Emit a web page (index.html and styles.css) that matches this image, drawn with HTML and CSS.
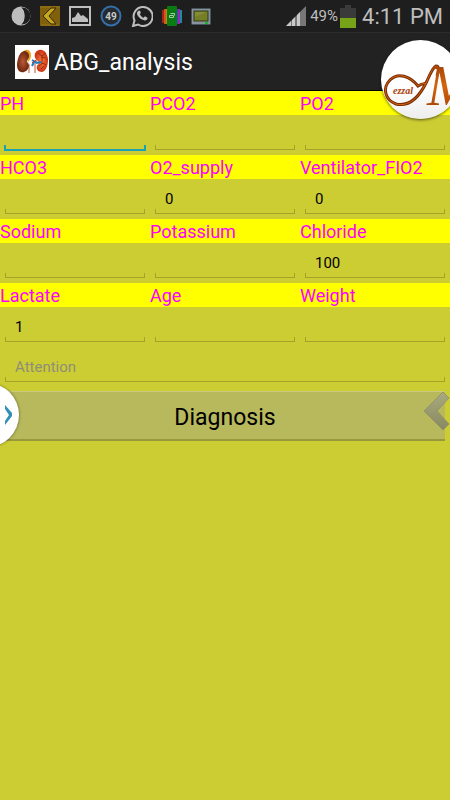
FILE: index.html
```html
<!DOCTYPE html>
<html lang="en">
<head>
    <meta charset="UTF-8">
    <meta name="viewport" content="width=device-width, initial-scale=1">
    <title>ABG_analysis</title>
    <link rel="stylesheet" href="styles.css">
</head>
<body>
    <div class="status">
        <div class="notices">
            <svg width="20" height="20" viewBox="0 0 20 20">
                <circle cx="10" cy="10" r="9.5" fill="#bebebe"/>
                <path d="M11 1.500a8.500 8.500 0 0 1 0 17C15 14 15 6 11 1.500z" fill="#202020"/>
                <path d="M10 1.500c5 2 5 15 0 17a8.500 8.500 0 0 0 0-17z" fill="#202020"/>
            </svg>
            <svg width="20" height="20" viewBox="0 0 20 20">
                <rect width="20" height="20" rx="1" fill="#80610b"/>
                <path d="M0 1h20M1 19h18" stroke="#98771c"/>
                <path d="M16 2l-7 8 7 8h-5L3 10l8-8z" fill="#c6a51e" stroke="#35280a"/>
            </svg>
            <svg width="22" height="20" viewBox="0 0 22 20">
                <rect x="1" y="1" width="20" height="18" fill="none" stroke="#bebebe" stroke-width="2"/>
                <path d="M3 16v-4l3-1 3-5 3 4 2-1 5 4v3z" fill="#bebebe"/>
            </svg>
            <svg width="22" height="22" viewBox="0 0 22 22">
                <circle cx="11" cy="11" r="9.5" fill="#242a30" stroke="#356ea9" stroke-width="2"/>
                <text x="11" y="15" class="count">49</text>
            </svg>
            <svg width="22" height="22" viewBox="0 0 22 22">
                <path d="M2 21l1.500-5.500A9.500 9.500 0 1 1 7 19.500z" fill="none" stroke="#bebebe" stroke-width="2"/>
                <path d="M7 6c1-1 2-.6 2.400.6.4 1.200.6 1.600-.6 2.600.8 1.600 2 2.800 3.800 3.600 1-1.200 1.200-1.600 2.600-.8 1.600.8 1.600 1.200.8 2.400-1.200 1.400-3 1.200-5 .2C8.500 13.200 6.500 11 6 9c-.2-1.200.2-2.200 1-3z" fill="#bebebe"/>
            </svg>
            <svg width="20" height="20" viewBox="0 0 20 20">
                <path d="M0 4h2v13H0z" fill="#a8221a"/>
                <path d="M2 3h2v15H2z" fill="#d35715"/>
                <path d="M4 3h2v15H4z" fill="#a89216"/>
                <path d="M14 3h2v15h-2z" fill="#2455b0"/>
                <path d="M16 3h2v15h-2z" fill="#a51fb0"/>
                <path d="M18 4h2v13h-2z" fill="#188da0"/>
                <rect x="5" width="10" height="20" rx="1" fill="#0a7a12"/>
                <path d="M7.500 9.500h4v2h-4zM8.500 7.500h4v2" fill="none" stroke="#a9cda9"/>
            </svg>
            <svg width="20" height="17" viewBox="0 0 20 17">
                <rect x=".5" y=".5" width="19" height="16" rx="1" fill="#87949d" stroke="#48545d"/>
                <rect x="3" y="3" width="14" height="10" fill="#757d26" stroke="#333b12"/>
                <path d="M4 4h12L4 9z" fill="#858c36"/>
                <path d="M14 15h3" stroke="#17b52b" stroke-width="2"/>
            </svg>
        </div>
        <div class="system">
            <svg width="20" height="20" viewBox="0 0 20 20">
                <path d="M0 20L20 0v20z" fill="#777"/>
                <path d="M0 20l5-5v5zM6 20v-6l3-3v9zM11 20V9l3-3v14z" fill="#c8c8c8"/>
            </svg>
            <span class="percent">49%</span>
            <svg width="16" height="23" viewBox="0 0 16 23">
                <path d="M0 3h5V0h6v3h5v20H0z" fill="#3a3a3a"/>
                <path d="M0 13h16v10H0z" fill="#76a318"/>
            </svg>
            <span class="clock">4:11 PM</span>
        </div>
    </div>
    <div class="bar">
        <svg class="kidneys" width="34" height="34" viewBox="0 0 34 34">
            <defs>
                <radialGradient id="brown">
                    <stop offset="0" stop-color="#b85a38"/>
                    <stop offset="1" stop-color="#71270f"/>
                </radialGradient>
                <radialGradient id="orange">
                    <stop offset="0" stop-color="#f08040"/>
                    <stop offset="1" stop-color="#cc3312"/>
                </radialGradient>
            </defs>
            <rect width="34" height="34" fill="#fff"/>
            <path d="M8 7c3-4 8-2 8 3 0 3-1 5-3 7z" fill="#e6a21c"/>
            <path d="M11 17l3 3v8" fill="none" stroke="#e0a898" stroke-width="2"/>
            <path d="M10 6c4 1 5 5 3 8-3 3 1 4 1 7-1 5-5 7-8 6C2 26 1 20 3 14c1-4 3-8 7-8z" fill="url(#brown)"/>
            <path d="M22 15l-2 4v9" fill="none" stroke="#e0a898" stroke-width="2"/>
            <path d="M24 5c5-1 8 3 9 9 0 7-2 12-6 13-4 0-6-3-5-6 1-2 3-3 1-5-5-3-4-10 1-11z" fill="url(#orange)"/>
            <path d="M23 8l4 3 4-3M26 12l5 1M24 21l4-3 3 2M27 11v8M26 24l3-3" fill="none" stroke="#9c2c14"/>
            <path d="M17 15l5 3 4-1M19 17l-2 4" fill="none" stroke="#1680c8" stroke-width="2"/>
            <path d="M17 18l4-3" stroke="#d52222"/>
        </svg>
        <h1>ABG_analysis</h1>
    </div>
    <form>
        <div class="grid">
            <div class="field"><label for="ph">PH</label><input id="ph" class="active" type="text"></div>
            <div class="field"><label for="pco2">PCO2</label><input id="pco2" type="text"></div>
            <div class="field"><label for="po2">PO2</label><input id="po2" type="text"></div>
            <div class="field"><label for="hco3">HCO3</label><input id="hco3" type="text"></div>
            <div class="field"><label for="supply">O2_supply</label><input id="supply" type="text" value="0"></div>
            <div class="field"><label for="fio2">Ventilator_FIO2</label><input id="fio2" type="text" value="0"></div>
            <div class="field"><label for="sodium">Sodium</label><input id="sodium" type="text"></div>
            <div class="field"><label for="potassium">Potassium</label><input id="potassium" type="text"></div>
            <div class="field"><label for="chloride">Chloride</label><input id="chloride" type="text" value="100"></div>
            <div class="field"><label for="lactate">Lactate</label><input id="lactate" type="text" value="1"></div>
            <div class="field"><label for="age">Age</label><input id="age" type="text"></div>
            <div class="field"><label for="weight">Weight</label><input id="weight" type="text"></div>
        </div>
        <div class="field"><input type="text" placeholder="Attention" aria-label="Attention"></div>
        <button class="diagnosis" type="button">Diagnosis</button>
    </form>

    <!-- floating overlays -->
    <button class="bubble" type="button">
        <svg width="79" height="79" viewBox="0 0 79 79">
            <defs>
                <linearGradient id="copper" x1="0" y1="0" x2="0" y2="1">
                    <stop offset="0" stop-color="#8c3306"/>
                    <stop offset=".5" stop-color="#d5650f"/>
                    <stop offset="1" stop-color="#963704"/>
                </linearGradient>
            </defs>
            <path class="swash-edge" d="M45 44c-3-1-5 0-8 2C29 36 17 32 9 40 1 48 4 60 15 64c13 3 23-6 31-23 3-7 6-14 9-15 3 0 3 4 1 10"/>
            <path class="swash" d="M45 44c-3-1-5 0-8 2C29 36 17 32 9 40 1 48 4 60 15 64c13 3 23-6 31-23 3-7 6-14 9-15 3 0 3 4 1 10"/>
            <text x="46" y="65" class="initial">M</text>
            <text x="12" y="54" class="brand">ezzal</text>
        </svg>
    </button>
    <button class="drawer" type="button" aria-label="Open panel">
        <svg width="8" height="20" viewBox="0 0 8 20">
            <path d="M0 0l7 8v3l-7 9v-4l4-6-4-6z" fill="#3290b5"/>
        </svg>
    </button>
    <button class="back" type="button" aria-label="Back">
        <svg width="26" height="40" viewBox="0 0 26 40">
            <defs>
                <linearGradient id="grey" x1="0" y1="0" x2="0" y2="1">
                    <stop offset="0" stop-color="#a9aa80"/>
                    <stop offset="1" stop-color="#89895f"/>
                </linearGradient>
            </defs>
            <path d="M19 1l6 6-12 13 12 13-6 6L0 20z" fill="url(#grey)" stroke="#93936b"/>
        </svg>
    </button>
</body>
</html>
```

FILE: styles.css
```css
*{
    margin:0;
    padding:0;
    box-sizing: border-box;
}
body{
    position: relative;
    min-height: 100vh;
    overflow-x: hidden;
    background: #cccc33;
    color:#000;
    font-family: Roboto, "Liberation Sans", sans-serif;
}
svg{
    display: block;
    flex: none;
}
button{
    border:0;
    font-family: inherit;
    cursor: pointer;
}
.status{
    display: flex;
    justify-content: space-between;
    align-items: center;
    height:32px;
    padding: 0 7px 0 11px;
    background: #1e1e1e;
    color:#bebebe;
}
.notices{
    display: flex;
    align-items: center;
    gap: 9px;
}
.system{
    display: flex;
    align-items: center;
    gap: 2px;
}
.count{
    fill:#c8c8c8;
    font-size:10px;
    font-weight: bold;
    text-anchor: middle;
}
.percent{
    padding-left: 2px;
    font-size:15px;
}
.clock{
    padding-left: 4px;
    font-size:22px;
}
.bar{
    display: flex;
    align-items: center;
    gap: 5px;
    height:59px;
    padding-left: 15px;
    background: #222;
    border-top:1px solid #2c2c2c;
    border-bottom:1px solid #000;
    color:#fff;
}
h1{
    padding-top: 2px;
    font-size:23px;
    font-weight: normal;
}
.grid{
    display: grid;
    grid-template-columns: repeat(3, 1fr);
}
label{
    display: block;
    height:24px;
    background: #ff0;
    color:#f0f;
    font-size:18px;
    line-height: 26px;
}
input{
    display: block;
    width:100%;
    height:40px;
    padding: 0 15px;
    border:0;
    outline: 0;
    /* underline with a short tick at each end */
    background:
        linear-gradient(#a3a32b,#a3a32b) 5px 34px / calc(100% - 10px) 1px no-repeat,
        linear-gradient(#a3a32b,#a3a32b) 5px 30px / 1px 4px no-repeat,
        linear-gradient(#a3a32b,#a3a32b) calc(100% - 5px) 30px / 1px 4px no-repeat;
    color:#000;
    font-family: inherit;
    font-size:15px;
}
input.active{
    background:
        linear-gradient(#1ba1b5,#1ba1b5) 4px 34px / calc(100% - 8px) 2px no-repeat,
        linear-gradient(#1ba1b5,#1ba1b5) 4px 30px / 2px 5px no-repeat,
        linear-gradient(#1ba1b5,#1ba1b5) calc(100% - 4px) 30px / 2px 5px no-repeat;
}
input::placeholder{
    color:#8f8f78;
    opacity: 1;
}
.diagnosis{
    display: block;
    width:calc(100% - 10px);
    height:50px;
    margin: 4px 5px;
    padding-top: 3px;
    background: #b8b85c;
    border-top:1px solid #c9c980;
    border-bottom:2px solid #98983f;
    color:#000;
    font-size:23px;
}
.bubble{
    position: absolute;
    top:40px;
    right:-10px;
    border-radius: 50%;
    background: linear-gradient(#fff 60%,#ededed);
    box-shadow: 0 1px 3px rgba(0,0,0,.6);
}
.swash-edge{
    fill:none;
    stroke:#7a2c05;
    stroke-width: 3;
}
.swash{
    fill:none;
    stroke:#d5650f;
}
.initial{
    fill:url(#copper);
    font: italic 56px "Liberation Serif", serif;
}
.brand{
    fill:#a8400a;
    font: italic bold 10px "Liberation Serif", serif;
}
.drawer{
    position: absolute;
    top:383px;
    left:-45px;
    display: flex;
    justify-content: flex-end;
    align-items: center;
    width:64px;
    height:64px;
    padding-right: 6px;
    border-radius: 50%;
    background: #fff;
    box-shadow: 0 0 3px rgba(0,0,0,.5);
}
.back{
    position: absolute;
    top:391px;
    right:0;
    background: none;
}
```
